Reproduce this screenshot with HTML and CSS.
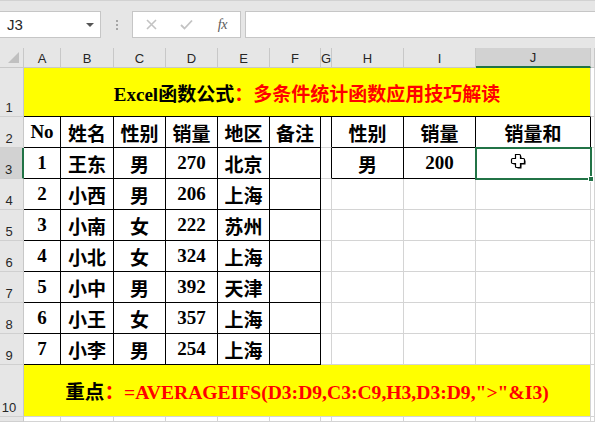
FILE: index.html
```html
<!DOCTYPE html>
<html lang="zh-CN">
<head>
<meta charset="utf-8">
<title>Excel</title>
<link rel="stylesheet" href="styles.css">
</head>
<body>
<div class="fbar">
  <div class="namebox"><span>J3</span><span class="caret"></span></div>
  <div class="sep"><i></i><i></i><i></i></div>
  <div class="fxbox">
    <span class="slot"><svg width="11" height="11" viewBox="0 0 11 11"><path d="M1 1L10 10M10 1L1 10" stroke="#c3c3c3" stroke-width="1.6" fill="none"/></svg></span>
    <span class="slot"><svg width="13" height="11" viewBox="0 0 13 11"><path d="M1 6L4.5 9.5L12 1.5" stroke="#c3c3c3" stroke-width="1.8" fill="none"/></svg></span>
    <span class="slot fx">fx</span>
  </div>
  <div class="input"></div>
</div>

<div class="sheet">
  <!-- column headers -->
  <div class="ch corner"></div>
  <div class="ch">A</div><div class="ch">B</div><div class="ch">C</div><div class="ch">D</div><div class="ch">E</div><div class="ch">F</div><div class="ch">G</div><div class="ch">H</div><div class="ch">I</div><div class="ch csel">J</div><div class="ch"></div>

  <!-- row 1 -->
  <div class="rh">1</div>
  <div class="c yel title"><span>Excel函数公式</span><span class="red">：多条件统计函数应用技巧解读</span></div>
  <div class="c"></div>

  <!-- row 2 -->
  <div class="rh">2</div>
  <div class="c t">No</div><div class="c t">姓名</div><div class="c t">性别</div><div class="c t">销量</div><div class="c t">地区</div><div class="c t">备注</div>
  <div class="c gb"></div>
  <div class="c t">性别</div><div class="c t">销量</div><div class="c t">销量和</div>
  <div class="c"></div>

  <!-- row 3 -->
  <div class="rh rsel">3</div>
  <div class="c t">1</div><div class="c t">王东</div><div class="c t">男</div><div class="c t">270</div><div class="c t">北京</div><div class="c t"></div>
  <div class="c gb"></div>
  <div class="c t">男</div><div class="c t">200</div><div class="c t"></div>
  <div class="c"></div>

  <!-- row 4 -->
  <div class="rh">4</div>
  <div class="c t">2</div><div class="c t">小西</div><div class="c t">男</div><div class="c t">206</div><div class="c t">上海</div><div class="c t"></div>
  <div class="c"></div><div class="c"></div><div class="c"></div><div class="c"></div><div class="c"></div>

  <!-- row 5 -->
  <div class="rh">5</div>
  <div class="c t">3</div><div class="c t">小南</div><div class="c t">女</div><div class="c t">222</div><div class="c t">苏州</div><div class="c t"></div>
  <div class="c"></div><div class="c"></div><div class="c"></div><div class="c"></div><div class="c"></div>

  <!-- row 6 -->
  <div class="rh">6</div>
  <div class="c t">4</div><div class="c t">小北</div><div class="c t">女</div><div class="c t">324</div><div class="c t">上海</div><div class="c t"></div>
  <div class="c"></div><div class="c"></div><div class="c"></div><div class="c"></div><div class="c"></div>

  <!-- row 7 -->
  <div class="rh">7</div>
  <div class="c t">5</div><div class="c t">小中</div><div class="c t">男</div><div class="c t">392</div><div class="c t">天津</div><div class="c t"></div>
  <div class="c"></div><div class="c"></div><div class="c"></div><div class="c"></div><div class="c"></div>

  <!-- row 8 -->
  <div class="rh">8</div>
  <div class="c t">6</div><div class="c t">小王</div><div class="c t">女</div><div class="c t">357</div><div class="c t">上海</div><div class="c t"></div>
  <div class="c"></div><div class="c"></div><div class="c"></div><div class="c"></div><div class="c"></div>

  <!-- row 9 -->
  <div class="rh">9</div>
  <div class="c t">7</div><div class="c t">小李</div><div class="c t">男</div><div class="c t">254</div><div class="c t">上海</div><div class="c t"></div>
  <div class="c"></div><div class="c"></div><div class="c"></div><div class="c"></div><div class="c"></div>

  <!-- row 10 -->
  <div class="rh">10</div>
  <div class="c yel note"><span>重点</span><span class="red">：=AVERAGEIFS(D3:D9,C3:C9,H3,D3:D9,"&gt;"&amp;I3)</span></div>
  <div class="c"></div>

  <!-- row 11 -->
  <div class="rh"></div>
  <div class="c"></div><div class="c"></div><div class="c"></div><div class="c"></div><div class="c"></div><div class="c"></div><div class="c"></div><div class="c"></div><div class="c"></div><div class="c"></div><div class="c"></div>

  <!-- active cell J3 -->
  <div class="selbox"><span class="handle"></span></div>
  <svg class="cursor" width="17" height="17" viewBox="0 0 17 17">
    <path d="M6.5 2.5H10.5V6.5H14.5V10.5H10.5V14.5H6.5V10.5H2.5V6.5H6.5Z" fill="#000" transform="translate(1 1)"/>
    <path d="M5.5 1.5H9.5C10 1.5 10.5 2 10.5 2.5V5.5H13.5C14 5.5 14.5 6 14.5 6.5V9.5C14.5 10 14 10.5 13.5 10.5H10.5V13.5C10.5 14 10 14.5 9.5 14.5H6.5C6 14.5 5.5 14 5.5 13.5V10.5H2.5C2 10.5 1.5 10 1.5 9.5V6.5C1.5 6 2 5.5 2.5 5.5H5.5Z" fill="#fff" stroke="#000" stroke-width="1.2"/>
  </svg>
</div>
</body>
</html>
```

FILE: styles.css
```css
* { box-sizing: border-box; }

body {
  margin: 0;
  width: 595px;
  height: 422px;
  overflow: hidden;
  background: #fff;
  font-family: "Liberation Sans", Arial, sans-serif;
}

/* ---------- formula bar ---------- */
.fbar {
  height: 48px;
  background: #e6e6e6;
  border-top: 1px solid #d2d2d2;
  padding-top: 10px;
  display: flex;
  align-items: flex-start;
}

.namebox {
  width: 101px;
  height: 27px;
  background: #fff;
  border: 1px solid #c6c6c6;
  border-left: none;
  display: flex;
  align-items: center;
  justify-content: space-between;
  padding: 0 6px 0 7px;
  font-size: 15px;
  color: #262626;
}

.caret {
  width: 0;
  height: 0;
  border-left: 4px solid transparent;
  border-right: 4px solid transparent;
  border-top: 4px solid #555;
}

.sep {
  width: 31px;
  height: 27px;
  display: flex;
  flex-direction: column;
  align-items: center;
  gap: 2px;
  padding-top: 9px;
}

.sep i {
  display: block;
  width: 2px;
  height: 2px;
  background: #a6a6a6;
}

.fxbox {
  width: 109px;
  height: 27px;
  background: #fff;
  border: 1px solid #c6c6c6;
  display: flex;
  align-items: center;
  padding-left: 1px;
}

.slot {
  width: 36px;
  display: flex;
  justify-content: center;
  align-items: center;
}

.fx {
  font-family: "Liberation Serif", serif;
  font-style: italic;
  font-size: 14px;
  color: #5a5a5a;
  letter-spacing: -0.5px;
}

.input {
  flex: 1;
  height: 27px;
  margin-left: 4px;
  background: #fff;
  border: 1px solid #c6c6c6;
  border-right: none;
}

/* ---------- sheet grid ---------- */
.sheet {
  position: relative;
  height: 374px;
  display: grid;
  grid-template-columns: 24px 37px 53px 52px 52px 52px 51px 11px 72px 72px 115px 1fr;
  grid-template-rows: 20px 49px repeat(8, 31px) 52px 1fr;
}

.ch {
  background: #e6e6e6;
  border-right: 1px solid #c8c8c8;
  border-bottom: 1px solid #c8c8c8;
  font-size: 13px;
  color: #262626;
  display: flex;
  align-items: center;
  justify-content: center;
  padding-top: 1px;
}

.corner {
  position: relative;
}

.corner::after {
  content: "";
  position: absolute;
  right: 4px;
  bottom: 4px;
  width: 0;
  height: 0;
  border-left: 11px solid transparent;
  border-bottom: 11px solid #c0c0c0;
}

.csel {
  background: #d2d2d2;
  border-bottom: 2px solid #217346;
}

.rh {
  background: #e6e6e6;
  border-right: 1px solid #c8c8c8;
  border-bottom: 1px solid #d0d0d0;
  font-size: 13px;
  color: #262626;
  display: flex;
  align-items: flex-end;
  justify-content: center;
  padding-right: 5px;
  padding-bottom: 1px;
}

.rsel {
  background: #d2d2d2;
  border-right: 2px solid #217346;
}

.c {
  border-right: 1px solid #d4d4d4;
  border-bottom: 1px solid #d4d4d4;
  display: flex;
  align-items: center;
  justify-content: center;
  font-family: "Liberation Serif", "Noto Sans CJK SC", serif;
  font-weight: bold;
  font-size: 19px;
  color: #000;
  white-space: nowrap;
}

.t {
  border-right-color: #000;
  border-bottom-color: #000;
}

.gb {
  border-right-color: #000;
}

.yel {
  grid-column: 2 / 12;
  background: #ffff00;
}

.title {
  border-bottom-color: #000;
}

.note {
  font-size: 19.6px;
}

.red {
  color: #ff0000;
}

/* ---------- active cell ---------- */
.selbox {
  position: absolute;
  left: 475px;
  top: 99px;
  width: 117px;
  height: 33px;
  border: 2px solid #217346;
}

.handle {
  position: absolute;
  right: -4px;
  bottom: -4px;
  width: 6px;
  height: 6px;
  background: #217346;
  border: 1px solid #fff;
}

.cursor {
  position: absolute;
  left: 510px;
  top: 105px;
}
```
